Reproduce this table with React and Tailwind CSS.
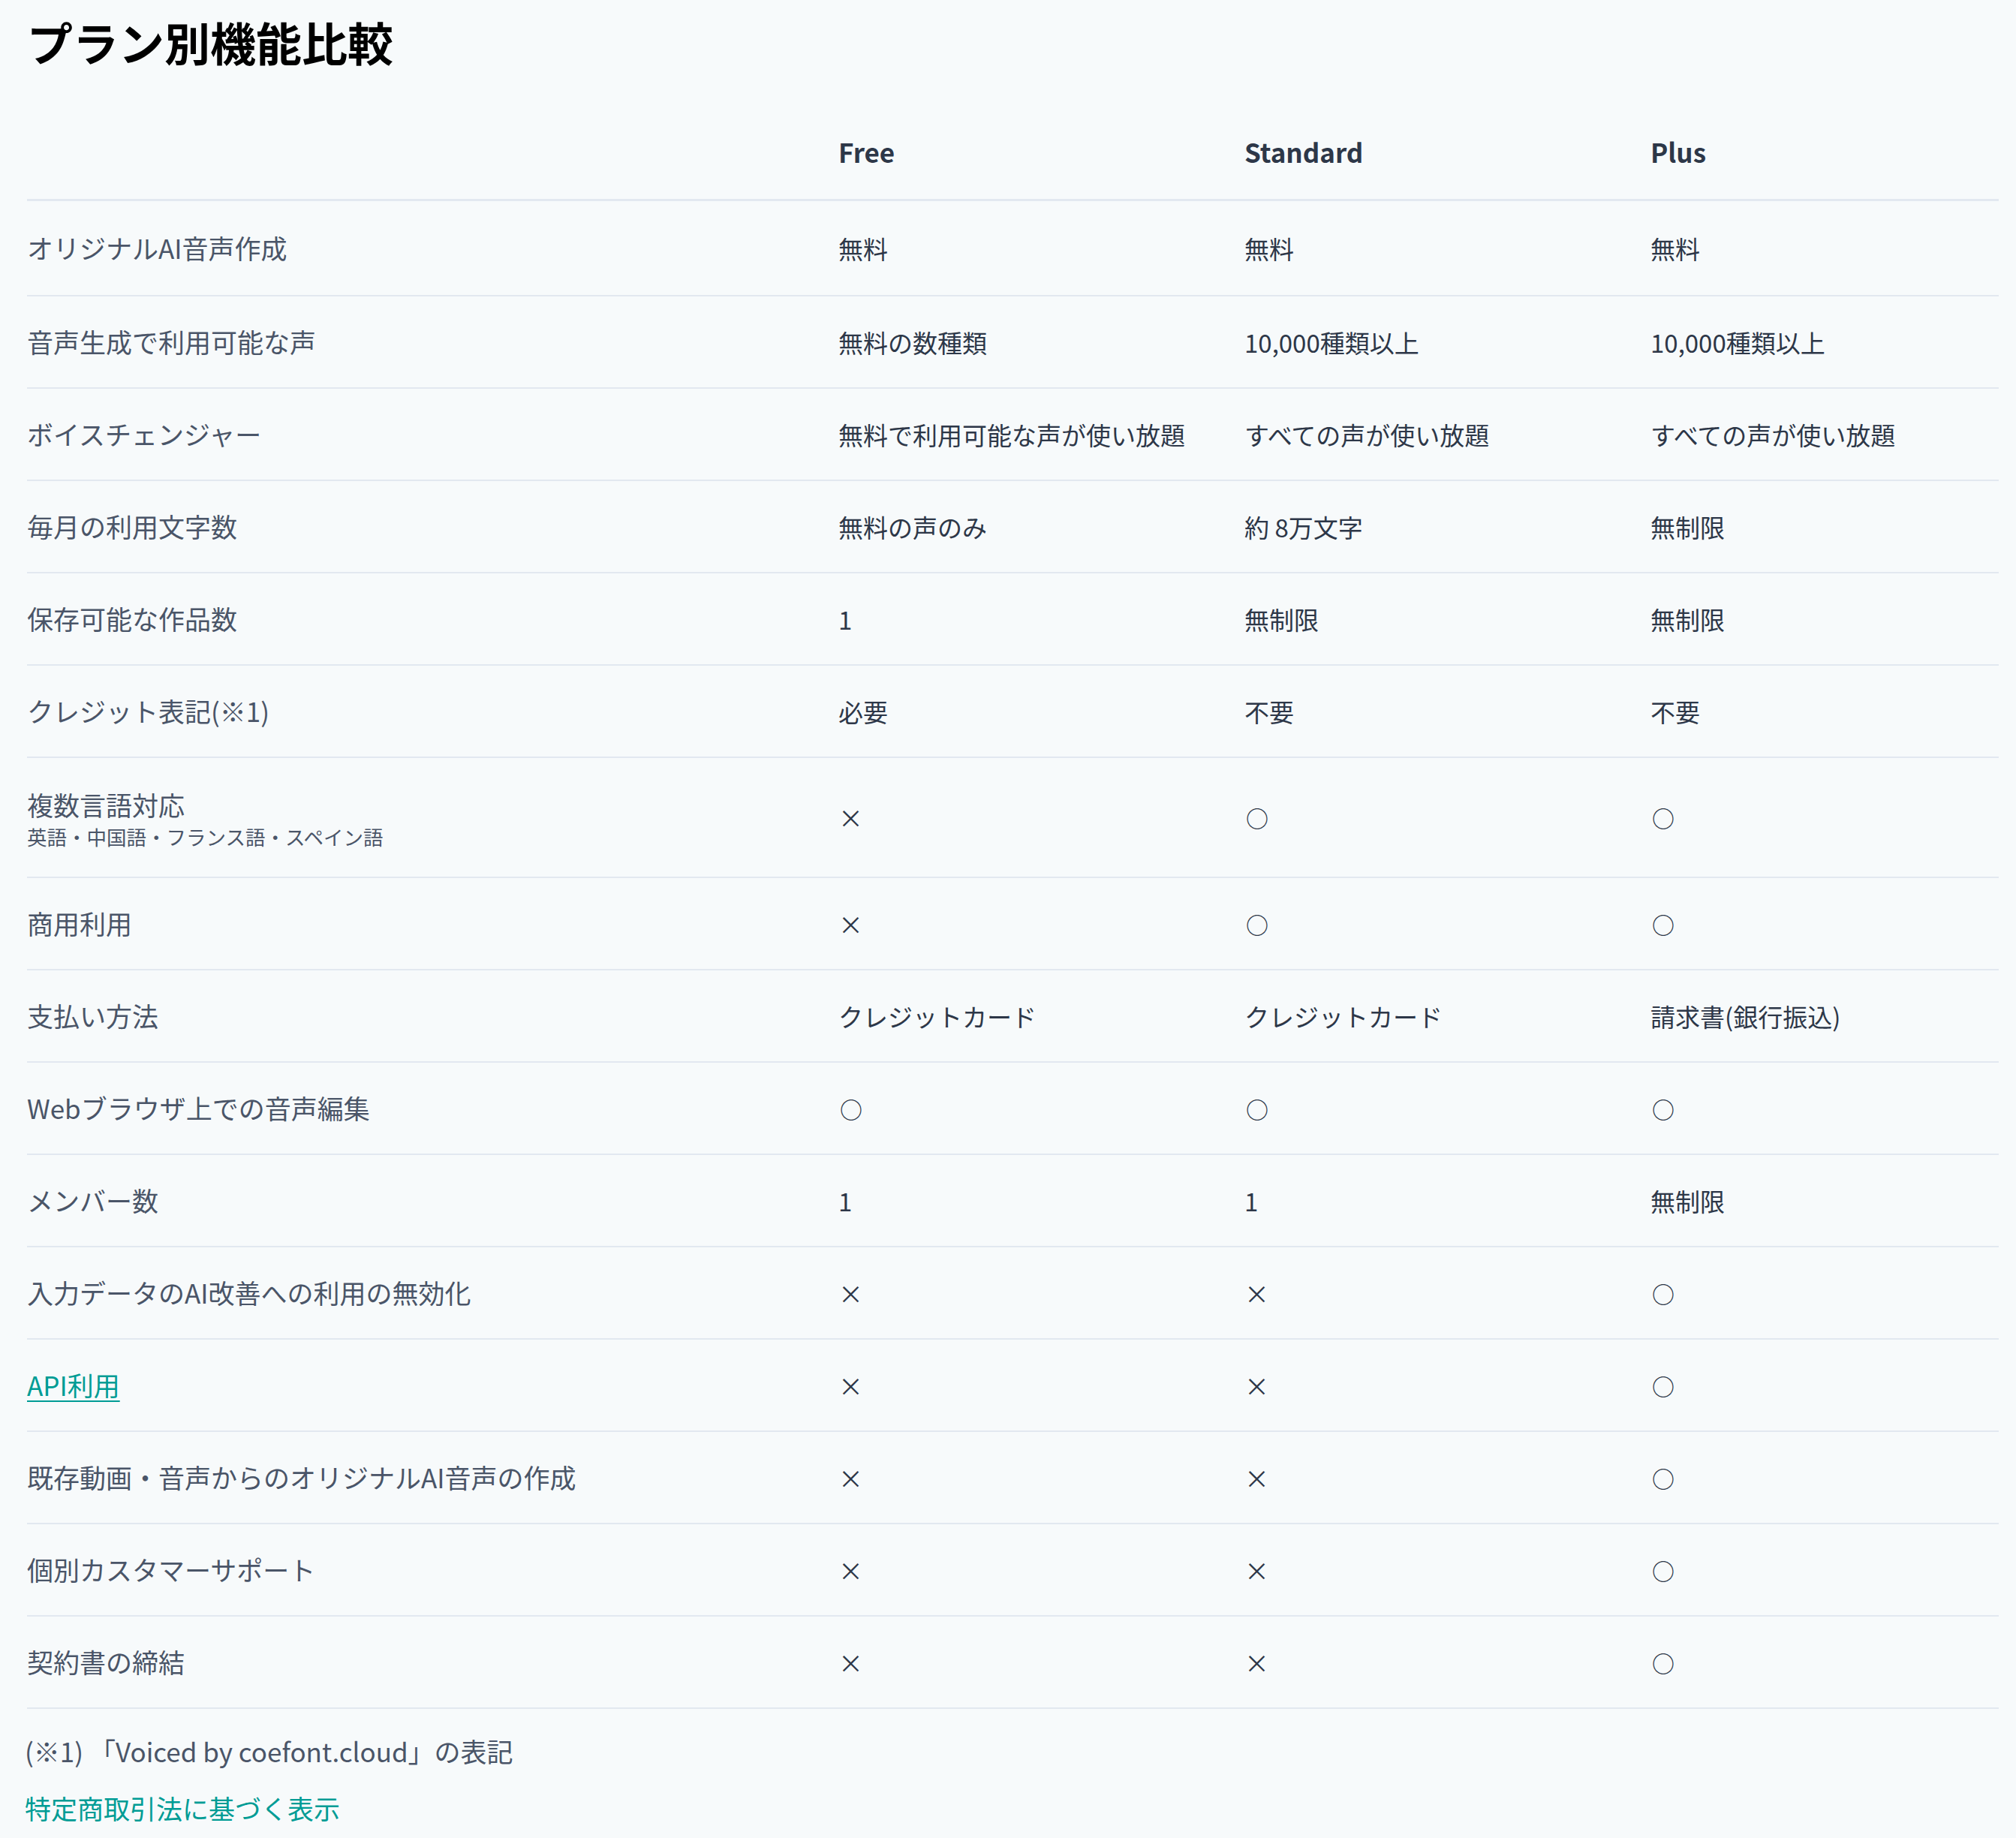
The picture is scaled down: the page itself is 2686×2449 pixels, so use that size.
import React from "react";

const rows = [
  { label: "オリジナルAI音声作成", values: ["無料", "無料", "無料"], h: "h-[127px]" },
  { label: "音声生成で利用可能な声", values: ["無料の数種類", "10,000種類以上", "10,000種類以上"] },
  { label: "ボイスチェンジャー", values: ["無料で利用可能な声が使い放題", "すべての声が使い放題", "すべての声が使い放題"] },
  { label: "毎月の利用文字数", values: ["無料の声のみ", "約 8万文字", "無制限"] },
  { label: "保存可能な作品数", values: ["1", "無制限", "無制限"] },
  { label: "クレジット表記(※1)", values: ["必要", "不要", "不要"] },
  { label: "複数言語対応", sub: "英語・中国語・フランス語・スペイン語", values: ["×", "○", "○"], h: "h-[160px]" },
  { label: "商用利用", values: ["×", "○", "○"] },
  { label: "支払い方法", values: ["クレジットカード", "クレジットカード", "請求書(銀行振込)"] },
  { label: "Webブラウザ上での音声編集", values: ["○", "○", "○"] },
  { label: "メンバー数", values: ["1", "1", "無制限"] },
  { label: "入力データのAI改善への利用の無効化", values: ["×", "×", "○"] },
  { label: "API利用", link: true, values: ["×", "×", "○"] },
  { label: "既存動画・音声からのオリジナルAI音声の作成", values: ["×", "×", "○"] },
  { label: "個別カスタマーサポート", values: ["×", "×", "○"] },
  { label: "契約書の締結", values: ["×", "×", "○"] },
];

function Cell({ v }) {
  if (v === "○") {
    return <div className="text-[#2d3748] text-[30px] font-medium leading-[52px] pl-[2px]">{v}</div>;
  }
  return <div className="text-[#2d3748] text-[33px] leading-[52px]">{v}</div>;
}

export default function App() {
  return (
    <div className="min-h-screen bg-[#f7fafb] pl-[36px] pt-[18px] pb-10 font-['Noto_Sans_CJK_JP','Noto_Sans',sans-serif] text-[35px]">
      {/* Title */}
      <h1 className="text-[61px] leading-[76px] font-bold text-black">プラン別機能比較</h1>

      {/* Table */}
      <div className="mt-[46px] w-[2627px]">
        {/* Header */}
        <div className="grid grid-cols-[1081px_541px_541px_1fr] items-center h-[128px] border-b-[3px] border-[#e2e8f0]">
          <div />
          <div className="font-bold text-[#2d3748] leading-[1.5]">Free</div>
          <div className="font-bold text-[#2d3748] leading-[1.5]">Standard</div>
          <div className="font-bold text-[#2d3748] leading-[1.5]">Plus</div>
        </div>

        {rows.map((r, i) => (
          <div
            key={i}
            className={`grid grid-cols-[1081px_541px_541px_1fr] items-center border-b-2 border-[#e2e8f0] ${r.h || "h-[123px]"}`}
          >
            <div>
              {r.link ? (
                <a href="#" className="text-[#009c95] underline decoration-2 underline-offset-[6px] leading-[1.5]">
                  {r.label}
                </a>
              ) : (
                <div className="text-[#4a5568] leading-[1.5]">{r.label}</div>
              )}
              {r.sub && <div className="text-[#4a5568] text-[26.5px] leading-[1.3]">{r.sub}</div>}
            </div>
            {r.values.map((v, j) => (
              <Cell key={j} v={v} />
            ))}
          </div>
        ))}
      </div>

      {/* Footnote */}
      <p className="mt-[30px] -ml-[3px] text-[#4a5568] leading-[1.5]">(※1) 「Voiced by coefont.cloud」の表記</p>
      <a href="#" className="block mt-[23px] -ml-[3px] text-[#009c95] leading-[1.5]">特定商取引法に基づく表示</a>
    </div>
  );
}
